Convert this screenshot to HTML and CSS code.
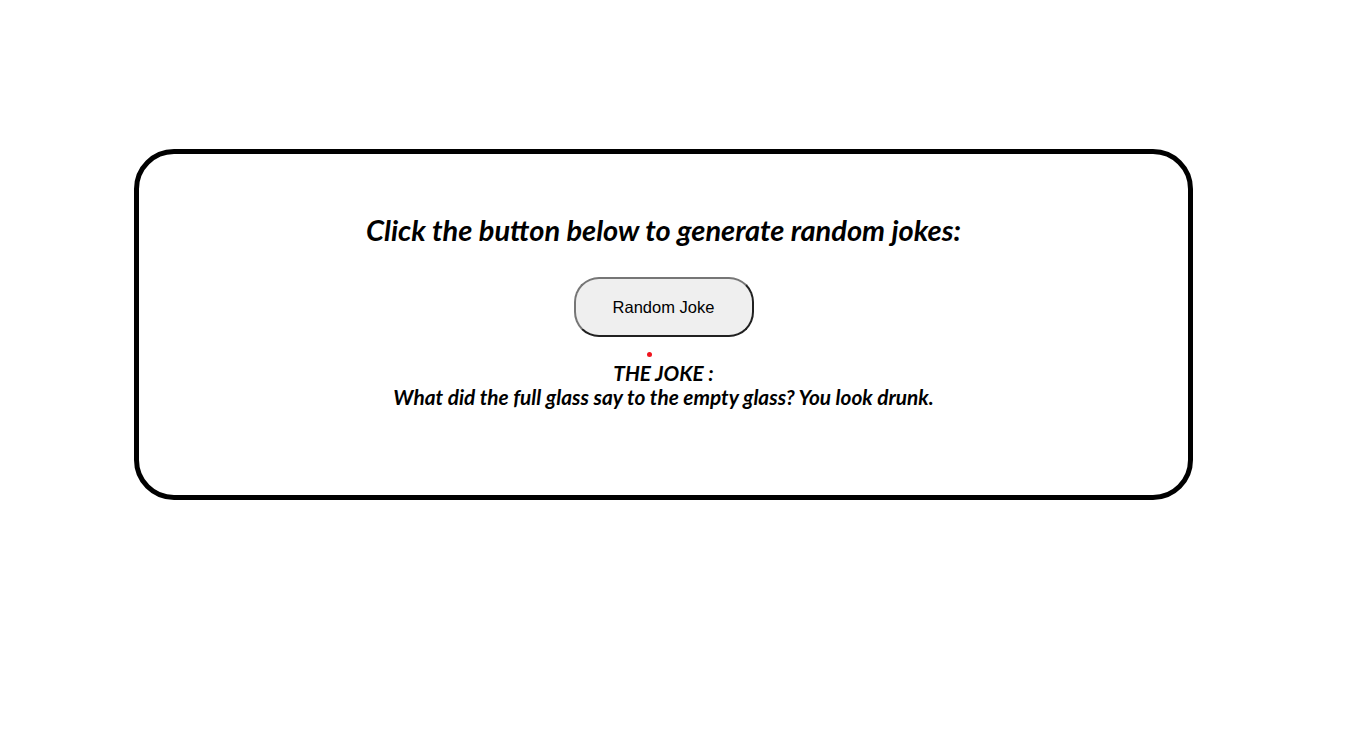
FILE: index.html
```html
<!DOCTYPE html>
<html>
<head>
<meta charset="utf-8">
<link rel="stylesheet" href="styles.css">
</head>
<body>
<div class="card">
  <h1 class="title">Click the button below to generate random jokes:</h1>
  <button class="joke-btn">Random Joke</button>
  <div class="dot-row"><span class="dot"></span></div>
  <div class="joke">
    <div class="joke-label">THE JOKE :</div>
    <div class="joke-text">What did the full glass say to the empty glass? You look drunk.</div>
  </div>
</div>
</body>
</html>
```
FILE: styles.css
```css
html, body {
  margin: 0;
  padding: 0;
  background: #fff;
}
body {
  padding-top: 149px;
}
.card {
  box-sizing: border-box;
  width: 1059px;
  height: 351px;
  margin-left: 134px;
  border: 5px solid #000;
  border-radius: 40px;
  display: flex;
  flex-direction: column;
  align-items: center;
  padding-top: 59px;
  font-family: "Lato", "Open Sans", sans-serif;
  font-style: italic;
  font-weight: 700;
  color: #000;
}
.title {
  margin: 0;
  font-size: 29px;
  line-height: 34px;
  font-weight: 700;
}
.joke-btn {
  margin-top: 30px;
  width: 180px;
  height: 60px;
  border-radius: 25px;
  border: 2px outset #767676;
  background: #efefef;
  font-family: "Liberation Sans", Arial, sans-serif;
  font-style: normal;
  font-weight: 400;
  font-size: 16.5px;
  color: #000;
}
.dot-row {
  width: 100%;
  display: flex;
  justify-content: center;
  height: 8px;
  padding-top: 15px;
  padding-bottom: 1px;
}
.dot {
  width: 5px;
  height: 5px;
  border-radius: 50%;
  background: #f0141e;
  margin-left: -29px;
}
.joke {
  text-align: center;
  font-size: 20.8px;
  line-height: 24px;
}
```
